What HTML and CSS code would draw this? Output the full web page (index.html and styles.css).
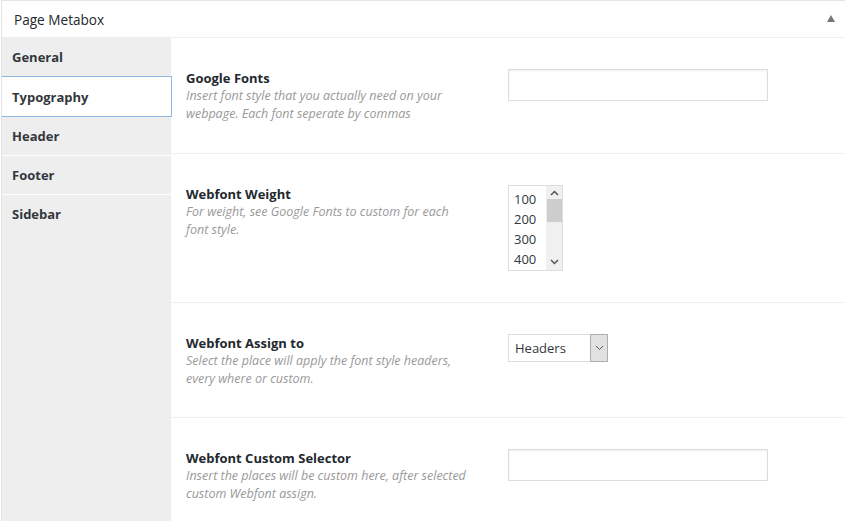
FILE: index.html
```html
<!DOCTYPE html>
<html>
<head>
<meta charset="utf-8">
<link rel="stylesheet" href="styles.css">
</head>
<body>
<div class="metabox">
  <div class="mb-head">
    <span class="mb-title">Page Metabox</span>
    <span class="mb-toggle"></span>
  </div>
  <div class="mb-body">
    <ul class="tabs">
      <li class="tab">General</li>
      <li class="tab active">Typography</li>
      <li class="tab">Header</li>
      <li class="tab">Footer</li>
      <li class="tab">Sidebar</li>
    </ul>
    <div class="fields">
      <div class="row">
        <div class="label">
          <div class="l-title">Google Fonts</div>
          <div class="l-desc">Insert font style that you actually need on your webpage. Each font seperate by commas</div>
        </div>
        <div class="control"><div class="text-input"></div></div>
      </div>
      <div class="row row-list">
        <div class="label">
          <div class="l-title">Webfont Weight</div>
          <div class="l-desc">For weight, see Google Fonts to custom for each font style.</div>
        </div>
        <div class="control">
          <div class="listbox">
            <div class="options">
              <div>100</div><div>200</div><div>300</div><div>400</div>
            </div>
            <div class="scroll">
              <svg class="arr" width="9" height="6" viewBox="0 0 9 6"><path d="M1 5 L4.5 1.5 L8 5" fill="none" stroke="#555" stroke-width="1.5"/></svg>
              <div class="thumb"></div>
              <div class="track"></div>
              <svg class="arr" width="9" height="6" viewBox="0 0 9 6"><path d="M1 1 L4.5 4.5 L8 1" fill="none" stroke="#555" stroke-width="1.5"/></svg>
            </div>
          </div>
        </div>
      </div>
      <div class="row row-select">
        <div class="label">
          <div class="l-title">Webfont Assign to</div>
          <div class="l-desc">Select the place will apply the font style headers, every where or custom.</div>
        </div>
        <div class="control">
          <div class="select">
            <span class="sel-val">Headers</span>
            <span class="sel-btn"><svg width="9" height="6" viewBox="0 0 9 6"><path d="M1 1 L4.5 4.5 L8 1" fill="none" stroke="#555" stroke-width="1"/></svg></span>
          </div>
        </div>
      </div>
      <div class="row">
        <div class="label">
          <div class="l-title">Webfont Custom Selector</div>
          <div class="l-desc">Insert the places will be custom here, after selected custom Webfont assign.</div>
        </div>
        <div class="control"><div class="text-input"></div></div>
      </div>
    </div>
  </div>
</div>
</body>
</html>
```
FILE: styles.css
```css
html, body {
  margin: 0;
  padding: 0;
  background: #fff;
  font-family: "Open Sans", "Noto Sans", sans-serif;
  color: #23282d;
}
.metabox {
  margin-left: 1px;
  width: 860px;
  border: 1px solid #e5e5e5;
  background: #fff;
  height: 540px;
  box-sizing: border-box;
  display: flex;
  flex-direction: column;
}
.mb-head {
  height: 37px;
  border-bottom: 1px solid #eee;
  display: flex;
  align-items: center;
  padding-left: 12px;
  padding-right: 11px;
  box-sizing: border-box;
  width: 844px;
}
.mb-title {
  font-size: 13.6px;
  flex: 1;
  padding-top: 1px;
}
.mb-toggle {
  width: 0;
  height: 0;
  border-left: 4px solid transparent;
  border-right: 4px solid transparent;
  border-bottom: 7px solid #72777c;
  margin-top: -2px;
}
.mb-body {
  display: flex;
  flex: 1;
}
.tabs {
  list-style: none;
  margin: 0;
  padding: 0;
  width: 169px;
  background: #eee;
  flex: none;
}
.tab {
  height: 38px;
  border-bottom: 1px solid #fff;
  box-sizing: content-box;
  display: flex;
  align-items: center;
  padding-left: 10px;
  font-size: 13px;
  font-weight: 700;
  color: #32373c;
}
.tab:last-child {
  border-bottom: none;
}
.tab.active {
  background: #fff;
  border: 1px solid #8cb8df;
  border-left: none;
  height: 39px;
  margin-top: -1px;
  width: 159px;
  position: relative;
  z-index: 1;
}
.fields {
  flex: 1;
  display: flex;
  flex-direction: column;
}
.row {
  display: flex;
  padding: 30px 0 30px 15px;
  border-bottom: 1px solid #eee;
}
.row-list {
  padding-top: 30px;
  padding-bottom: 31px;
}
.row-select {
  padding-bottom: 29px;
}
.label {
  width: 322px;
  flex: none;
}
.l-title {
  font-size: 13px;
  font-weight: 700;
  line-height: 18px;
  padding-top: 1px;
}
.l-desc {
  width: 283px;
  font-size: 12.5px;
  font-style: italic;
  line-height: 18px;
  color: #999;
}
.control {
  padding-top: 1px;
}
.text-input {
  width: 260px;
  height: 32px;
  border: 1px solid #ddd;
  box-shadow: inset 0 1px 2px rgba(0,0,0,0.07);
  box-sizing: border-box;
  background: #fff;
}
.listbox {
  width: 55px;
  height: 86px;
  border: 1px solid #ddd;
  box-sizing: border-box;
  display: flex;
  background: #fff;
}
.options {
  flex: 1;
  padding: 3px 0 0 5px;
  font-size: 13px;
  line-height: 20px;
  color: #32373c;
}
.scroll {
  width: 16px;
  background: #f0f0f0;
  display: flex;
  flex-direction: column;
  align-items: center;
}
.arr {
  flex: none;
  margin: 4px 0 3px;
}
.scroll .arr:last-child {
  margin: 3px 0 5px;
}
.thumb {
  width: 15px;
  height: 23px;
  background: #cdcdcd;
}
.track {
  flex: 1;
}
.select {
  width: 100px;
  height: 28px;
  border: 1px solid #ddd;
  box-sizing: border-box;
  display: flex;
  background: #fff;
}
.sel-val {
  flex: 1;
  font-size: 13px;
  line-height: 26px;
  padding-left: 6px;
  color: #32373c;
}
.sel-btn {
  width: 16px;
  background: #e1e1e1;
  border: 1px solid #adadad;
  display: flex;
  align-items: center;
  justify-content: center;
  margin: -1px -1px -1px 0;
}
```
